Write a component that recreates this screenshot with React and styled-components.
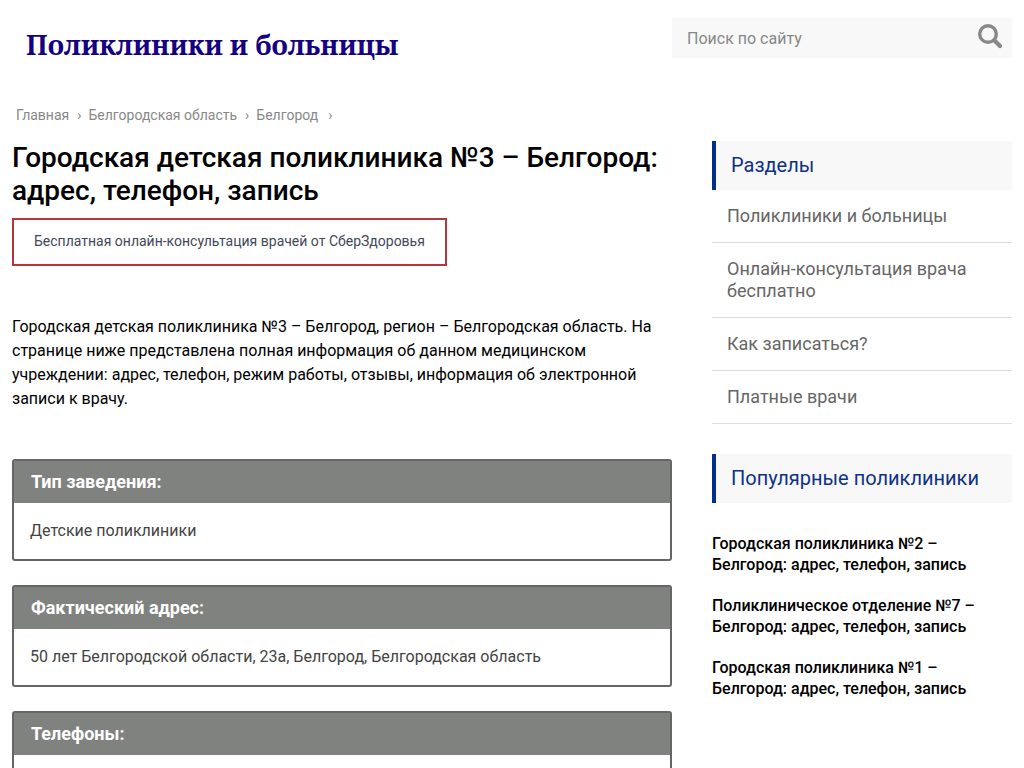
import React from "react";
import styled, { createGlobalStyle } from "styled-components";

const GlobalStyle = createGlobalStyle`
  *, *::before, *::after { box-sizing: border-box; }
  body {
    margin: 0;
    background: #fff;
    color: #000;
    font: 400 16px/24px Roboto, "Liberation Sans", sans-serif;
  }
  h1, h2, h3, p, ul, ol { margin: 0; padding: 0; }
  ul, ol { list-style: none; }
  a { color: inherit; text-decoration: none; }
`;

const Page = styled.div`
  max-width: 1200px;
  margin: 0 auto;
  padding: 0 12px;
`;

const Header = styled.header`
  display: flex;
  justify-content: space-between;
  align-items: flex-start;
  padding-top: 18px;
`;

const Logo = styled.a`
  padding: 10px 14px;
  color: #140080;
  font: 700 27px/34px "Noto Serif", "DejaVu Serif Condensed", "DejaVu Serif", serif;
`;

const SearchForm = styled.form`
  display: flex;
  width: 340px;
  height: 40px;
  background: #f8f8f8;
`;

const SearchInput = styled.input`
  flex: 1;
  min-width: 0;
  padding: 2px 15px 0;
  border: 0;
  background: transparent;
  color: #444;
  font: inherit;
  &::placeholder { color: #888; opacity: 1; }
`;

const SearchButton = styled.button`
  display: flex;
  padding: 6px 9px;
  border: 0;
  background: transparent;
  color: #888;
  cursor: pointer;
`;

const Breadcrumbs = styled.nav`
  padding: 33px 4px 16px;
  color: #888;
  font-size: 14px;
  line-height: 20px;
  ol { display: flex; }
  li { margin-right: 7px; }
  li::after { content: "›"; margin-left: 8px; }
  li:last-child::after { margin-left: 10px; }
`;

const Columns = styled.div`
  display: flex;
  align-items: flex-start;
  gap: 40px;
`;

const Main = styled.main`
  flex: 1;
  min-width: 0;
`;

const Title = styled.h1`
  font-size: 28px;
  line-height: 33px;
  font-weight: 500;
`;

const ConsultLink = styled.a`
  display: inline-block;
  margin-top: 11px;
  padding: 11px 20px 13px;
  border: 2px solid #b5363c;
  color: #424858;
  font-size: 14px;
  line-height: 20px;
  vertical-align: top;
`;

const Intro = styled.p`
  margin: 49px 0 48px;
`;

const Card = styled.section`
  margin-bottom: 24px;
  border: 2px solid #666;
  border-radius: 3px;
`;

const CardTitle = styled.h2`
  padding: 9px 17px;
  background: #80827f;
  color: #fff;
  font-size: 18px;
  line-height: 24px;
  font-weight: 700;
`;

const CardBody = styled.div`
  min-height: 56px;
  padding: 16px;
  color: #444;
`;

const Sidebar = styled.aside`
  flex: 0 0 300px;
`;

const SideTitle = styled.h3`
  padding: 12px 15px 13px;
  border-left: 4px solid #003087;
  background: #f8f8f8;
  color: #0f3184;
  font-size: 20px;
  line-height: 24px;
  font-weight: 400;
`;

const Menu = styled.ul`
  margin-bottom: 30px;
`;

const MenuItem = styled.li`
  padding: 15px;
  border-bottom: 1px solid #ddd;
  color: #666;
  font-size: 18px;
  line-height: 22px;
`;

const Popular = styled.ul`
  display: grid;
  gap: 20px;
  margin-top: 30px;
  font-weight: 500;
  line-height: 21px;
`;

const cards = [
  ["Тип заведения:", "Детские поликлиники"],
  ["Фактический адрес:", "50 лет Белгородской области, 23а, Белгород, Белгородская область"],
  ["Телефоны:", ""],
];
const sections = ["Поликлиники и больницы", "Онлайн-консультация врача бесплатно", "Как записаться?", "Платные врачи"];
const popular = [
  "Городская поликлиника №2 – Белгород: адрес, телефон, запись",
  "Поликлиническое отделение №7 – Белгород: адрес, телефон, запись",
  "Городская поликлиника №1 – Белгород: адрес, телефон, запись",
];

export default function App() {
  return (
    <>
      <GlobalStyle />
      <Page>
        <Header>
          <Logo href="#">Поликлиники и больницы</Logo>
          <SearchForm role="search">
            <SearchInput type="text" aria-label="Поиск по сайту" placeholder="Поиск по сайту" />
            <SearchButton type="button" aria-label="Найти">
              <svg width="25" height="26" viewBox="0 0 25 26" fill="none" stroke="currentColor" aria-hidden="true">
                <circle cx="10" cy="10" r="8.3" strokeWidth="3.4" />
                <path d="M16.5 16.5 22 22" strokeWidth="4.2" strokeLinecap="round" />
              </svg>
            </SearchButton>
          </SearchForm>
        </Header>
        <Breadcrumbs aria-label="Навигация">
          <ol>
            {["Главная", "Белгородская область", "Белгород"].map((t) => (
              <li key={t}><a href="#">{t}</a></li>
            ))}
          </ol>
        </Breadcrumbs>
        <Columns>
          <Main>
            <Title>Городская детская поликлиника №3 – Белгород: адрес, телефон, запись</Title>
            <ConsultLink href="#">Бесплатная онлайн-консультация врачей от СберЗдоровья</ConsultLink>
            <Intro>
              Городская детская поликлиника №3 – Белгород, регион – Белгородская область. На странице
              ниже представлена полная информация об данном медицинском учреждении: адрес, телефон,
              режим работы, отзывы, информация об электронной записи к врачу.
            </Intro>
            {cards.map(([title, text]) => (
              <Card key={title}>
                <CardTitle>{title}</CardTitle>
                <CardBody>{text}</CardBody>
              </Card>
            ))}
          </Main>
          <Sidebar>
            <SideTitle>Разделы</SideTitle>
            <Menu>
              {sections.map((t) => (
                <MenuItem key={t}><a href="#">{t}</a></MenuItem>
              ))}
            </Menu>
            <SideTitle>Популярные поликлиники</SideTitle>
            <Popular>
              {popular.map((t) => (
                <li key={t}><a href="#">{t}</a></li>
              ))}
            </Popular>
          </Sidebar>
        </Columns>
      </Page>
    </>
  );
}
